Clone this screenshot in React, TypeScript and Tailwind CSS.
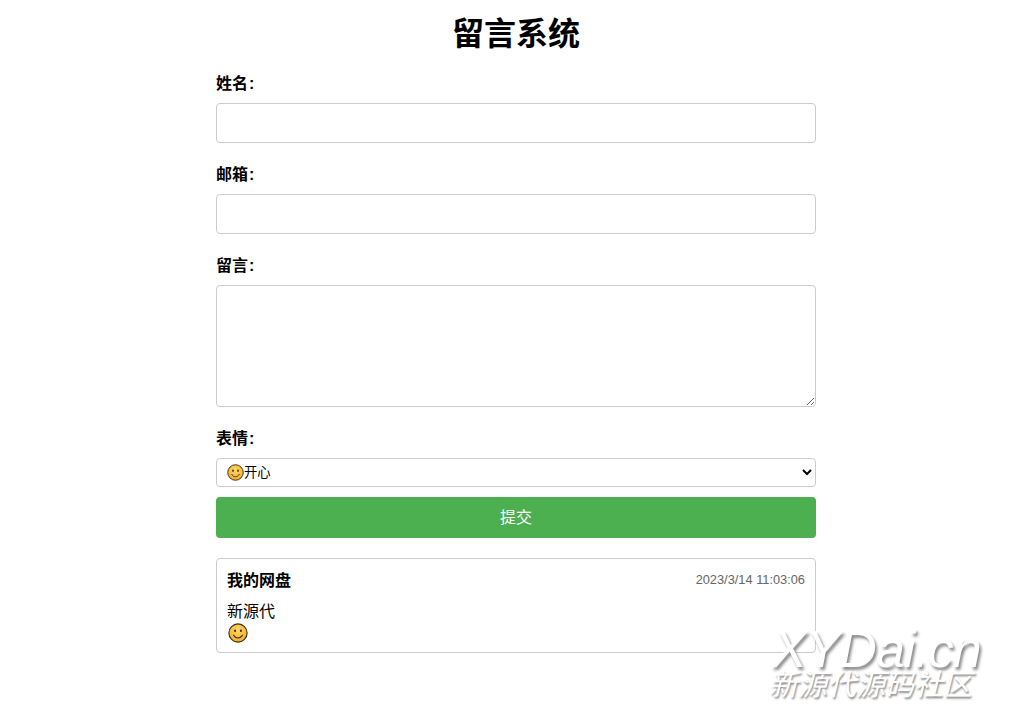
function Smile({ className }: { className: string }) {
  return (
    <svg viewBox="0 0 32 32" className={className}>
      <defs>
        <radialGradient id="sm" cx="50%" cy="35%" r="70%">
          <stop offset="0%" stopColor="#ffd75e" />
          <stop offset="100%" stopColor="#f0a92e" />
        </radialGradient>
      </defs>
      <circle cx="16" cy="16" r="14.6" fill="url(#sm)" stroke="#3a3018" strokeWidth="1.8" />
      <ellipse cx="11.3" cy="12.5" rx="1.6" ry="2.2" fill="#3a3018" />
      <ellipse cx="20.7" cy="12.5" rx="1.6" ry="2.2" fill="#3a3018" />
      <path d="M9 19.5c1.6 3 4 4.4 7 4.4s5.400-1.400 7-4.400" fill="none" stroke="#3a3018" strokeWidth="1.800" strokeLinecap="round" />
    </svg>
  );
}

const stack = "font-['Liberation_Sans','Noto_Sans_CJK_SC',sans-serif]";
const field = "block w-full rounded-[4px] border border-[#ccc] bg-white";
const label = "block text-base leading-6 font-bold text-black";

export default function App() {
  return (
    <div className={`relative h-[705px] overflow-hidden bg-white pl-[5px] text-black ${stack}`}>
      <div className="mx-auto w-[600px]">
        <h1 className="pt-[12px] pb-[15px] text-center text-[32px] leading-[44px] font-bold">留言系统</h1>
        <form className="pt-[1px]">
          <div className="mb-[20px]">
            <label className={`${label} mb-[7px]`}>姓名<span className="ml-[1px]">:</span></label>
            <input type="text" className={`${field} h-[40px]`} />
          </div>
          <div className="mb-[20px]">
            <label className={`${label} mb-[7px]`}>邮箱<span className="ml-[1px]">:</span></label>
            <input type="email" className={`${field} h-[40px]`} />
          </div>
          <div className="mb-[20px]">
            <label className={`${label} mb-[7px]`}>留言<span className="ml-[1px]">:</span></label>
            <textarea className={`${field} h-[122px]`} />
          </div>
          <label className={`${label} mb-[7px]`}>表情<span className="ml-[1px]">:</span></label>
          <div className="relative mb-[10px]">
            <select className={`${field} h-[29px] pl-[23px] text-[13.33px]`}>
              <option>开心</option>
            </select>
            <Smile className="absolute top-[6px] left-[11px] h-[17px] w-[17px]" />
          </div>
          <button type="button" className="block h-[41px] w-full rounded-[4px] bg-[#4caf50] pt-[1px] text-base text-white">提交</button>
        </form>
        <div className="mt-[20px] h-[95px] rounded-[4px] border border-[#ccc] px-[10px] pt-[10px]">
          <div className="mb-[8px] flex items-start justify-between">
            <strong className="text-base leading-6 font-bold">我的网盘</strong>
            <span className="mt-[1px] text-[12.8px] leading-5 text-[#666]">2023/3/14 11:03:06</span>
          </div>
          <p className="text-base leading-[22px]">新源代</p>
          <Smile className="ml-[1px] h-[20px] w-[20px]" />
        </div>
      </div>
      <div className="absolute top-[627px] left-[772px] text-[52px] leading-[44px] tracking-[-1px] text-white italic [text-shadow:2px_3px_3px_#888]">XYDai.cn</div>
      <div className="absolute top-[671px] left-[769px] text-[29px] leading-[28px] text-white italic [text-shadow:1px_2px_2px_#888]">新源代源码社区</div>
    </div>
  );
}
